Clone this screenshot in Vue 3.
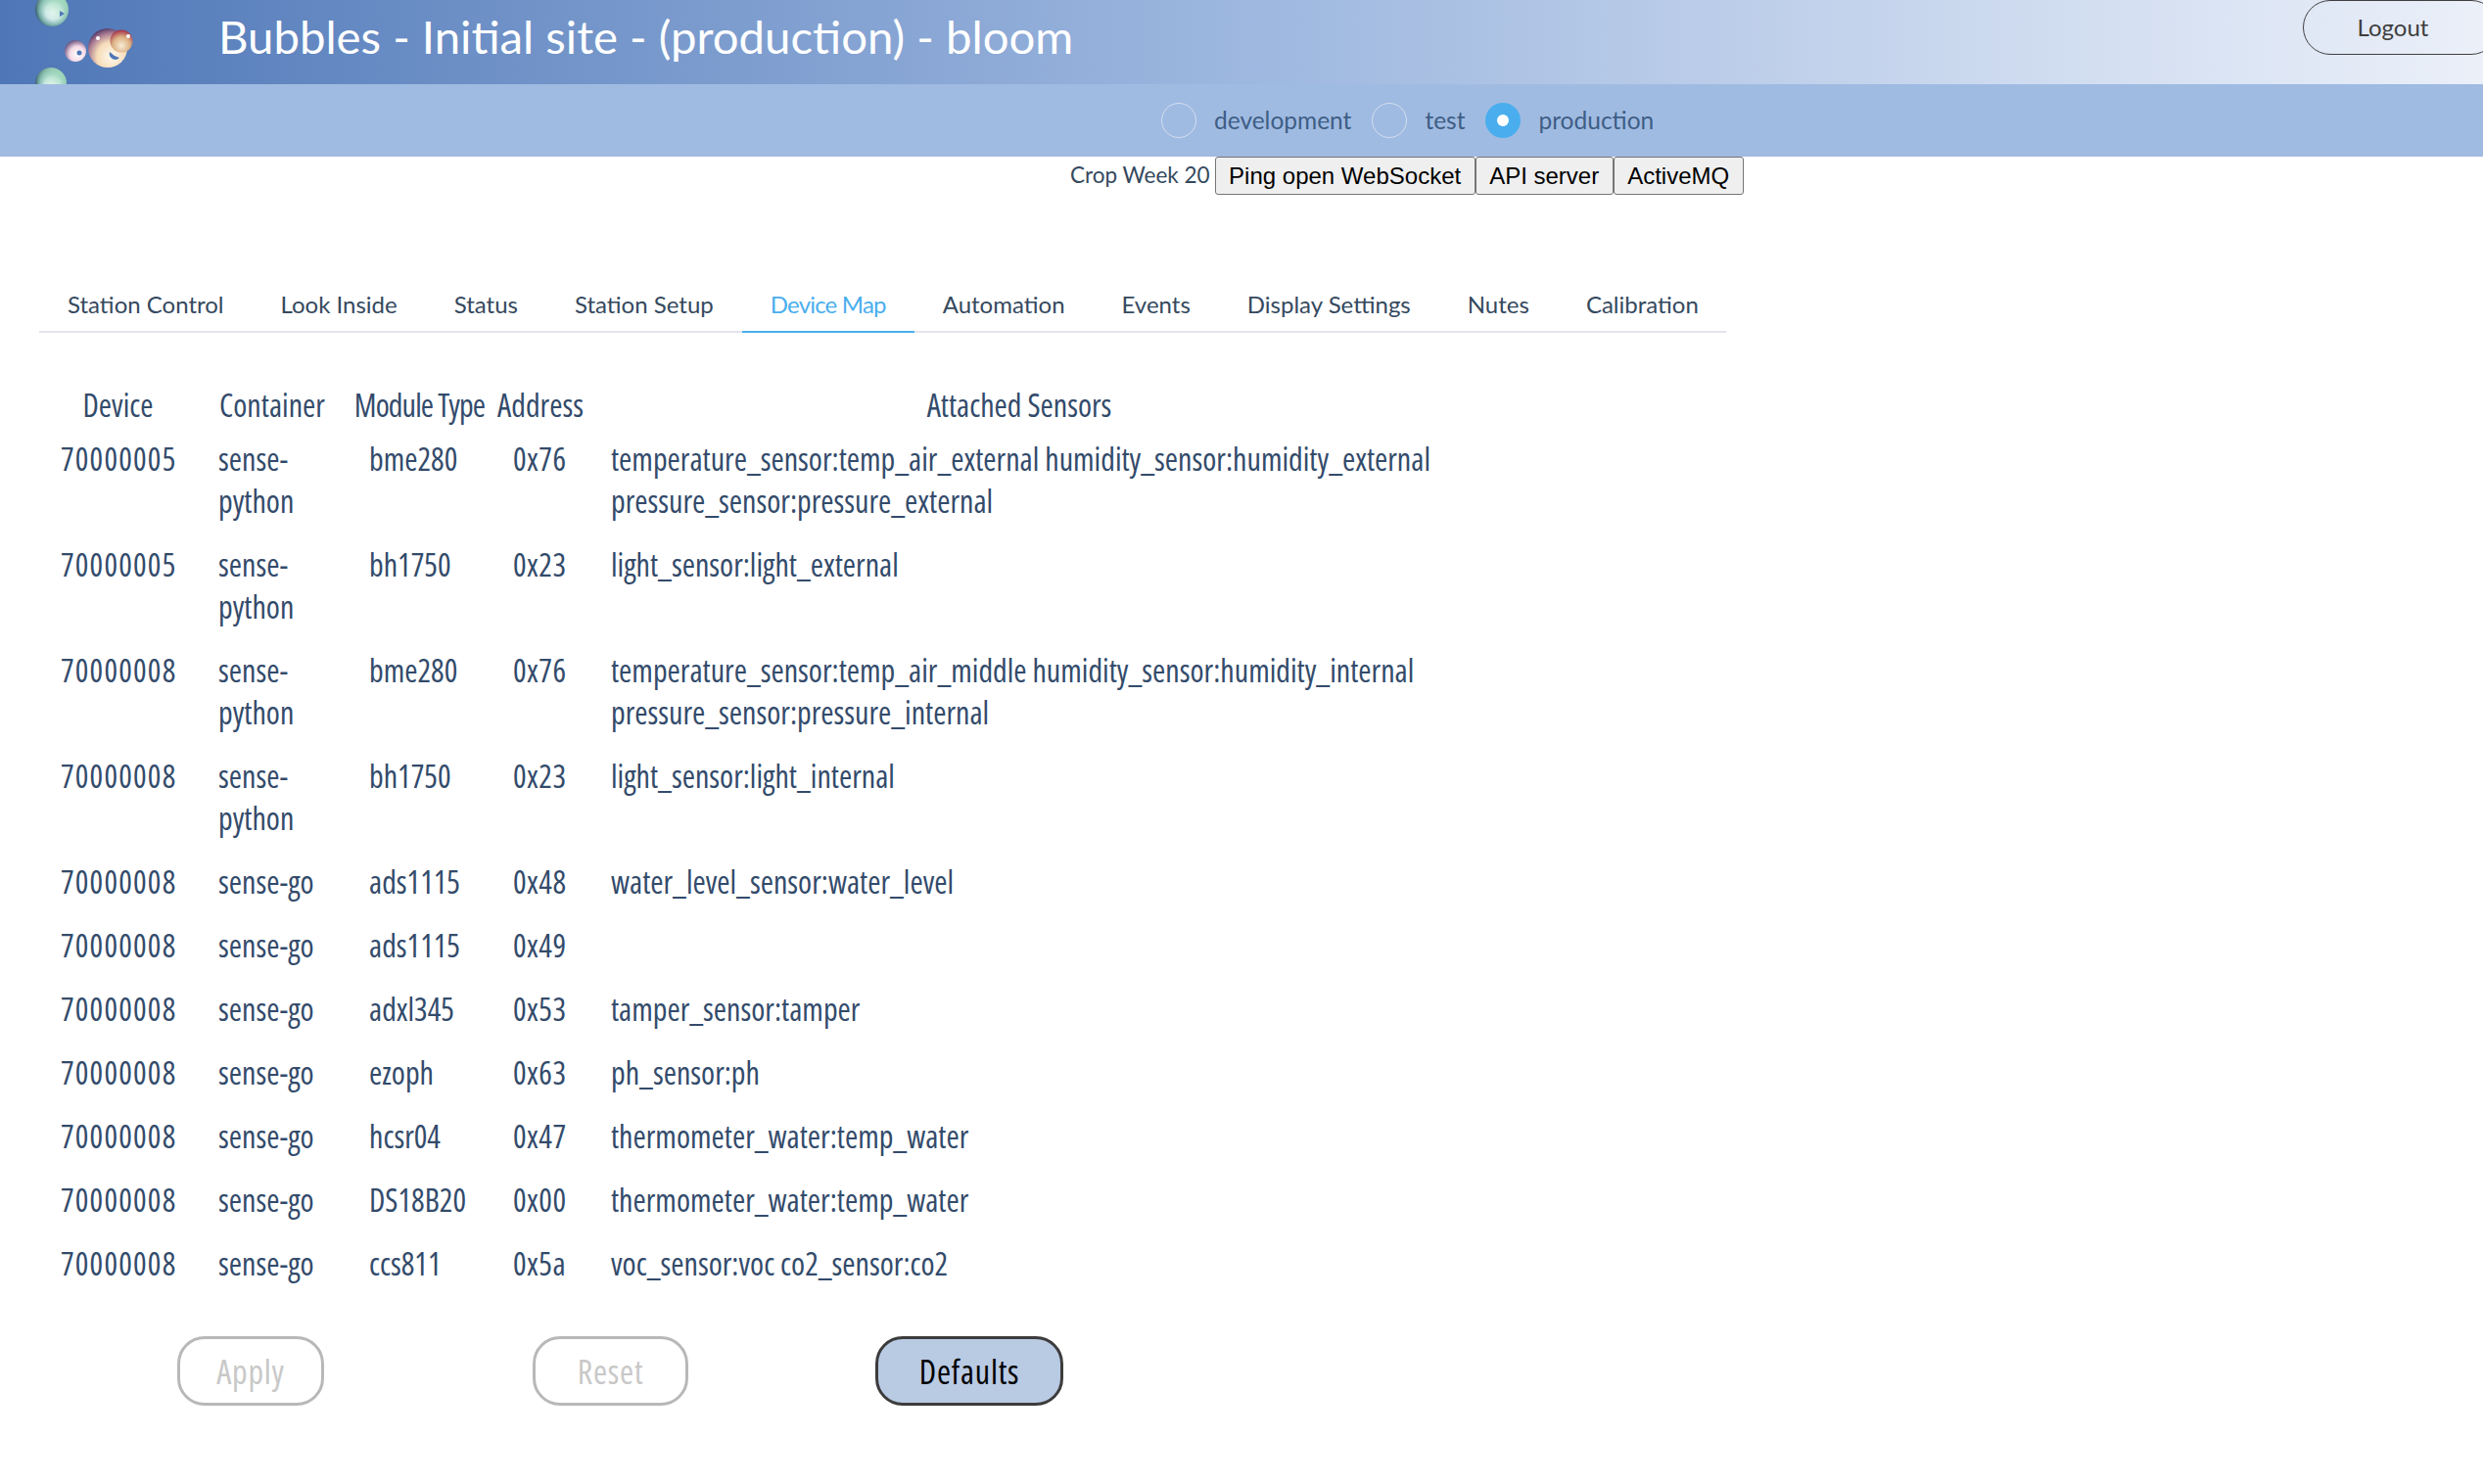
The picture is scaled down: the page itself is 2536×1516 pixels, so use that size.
<template>
  <div class="page">
    <header class="topbar">
      <svg class="logo" width="140" height="86" viewBox="0 0 140 86" aria-hidden="true">
        <defs>
          <radialGradient id="teal" cx="0.55" cy="0.55" r="0.6">
            <stop offset="0" stop-color="#ffffff" />
            <stop offset="0.4" stop-color="#d8ecf0" />
            <stop offset="0.72" stop-color="#6fa8a4" />
            <stop offset="1" stop-color="#13294a" />
          </radialGradient>
          <linearGradient id="tealcap" x1="0.8" y1="0" x2="0.3" y2="0.8">
            <stop offset="0" stop-color="#a8e0c0" />
            <stop offset="1" stop-color="#a8e0c0" stop-opacity="0" />
          </linearGradient>
          <radialGradient id="pink" cx="0.6" cy="0.65" r="0.65">
            <stop offset="0" stop-color="#ffffff" />
            <stop offset="0.55" stop-color="#f6dbe6" />
            <stop offset="1" stop-color="#6f5a86" />
          </radialGradient>
          <radialGradient id="amber" cx="0.6" cy="0.72" r="0.75">
            <stop offset="0" stop-color="#fffaf0" />
            <stop offset="0.5" stop-color="#f6dcb8" />
            <stop offset="0.8" stop-color="#a87a92" />
            <stop offset="1" stop-color="#4c3468" />
          </radialGradient>
          <radialGradient id="red" cx="0.5" cy="0.7" r="0.7">
            <stop offset="0" stop-color="#f8ecd4" />
            <stop offset="0.55" stop-color="#dcb184" />
            <stop offset="1" stop-color="#a02c48" />
          </radialGradient>
        </defs>
        <circle cx="53" cy="10" r="17" fill="url(#teal)" />
        <circle cx="53" cy="10" r="17" fill="url(#tealcap)" />
        <path d="M61 11l5 3-5 3z" fill="#4f77b7" />
        <circle cx="77" cy="52" r="11" fill="url(#pink)" />
        <circle cx="81" cy="54" r="2.5" fill="#4f77b7" />
        <circle cx="110" cy="49" r="20" fill="url(#amber)" />
        <path d="M112 53a6 6 0 0 0 10 6l-5-2z" fill="#4f77b7" />
        <circle cx="100" cy="39" r="2" fill="#fff" />
        <circle cx="124" cy="42" r="11.5" fill="url(#red)" />
        <circle cx="131" cy="37" r="2" fill="#fff" />
        <circle cx="52" cy="85" r="16" fill="url(#teal)" />
        <circle cx="52" cy="85" r="16" fill="url(#tealcap)" />
      </svg>
      <h1 class="title">Bubbles - Initial site - (production) - bloom</h1>
      <button type="button" class="logout">Logout</button>
    </header>

    <div class="envbar">
      <label v-for="e in envs" :key="e" class="env">
        <span class="radio" :class="{ on: e === env }"></span>
        <span>{{ e }}</span>
      </label>
    </div>

    <div class="toolrow">
      <span class="week">Crop Week 20</span>
      <button v-for="b in tools" :key="b" type="button" class="tool">{{ b }}</button>
    </div>

    <nav class="tabs">
      <a v-for="t in tabs" :key="t" class="tab" :class="{ active: t === tab }">{{ t }}</a>
    </nav>

    <table class="map">
      <colgroup>
        <col class="c1" /><col class="c2" /><col class="c3" /><col class="c4" /><col class="c5" />
      </colgroup>
      <thead>
        <tr>
          <th>Device</th>
          <th>Container</th>
          <th>Module Type</th>
          <th>Address</th>
          <th>Attached Sensors</th>
        </tr>
      </thead>
      <tbody>
        <tr v-for="(r, i) in rows" :key="i">
          <td>{{ r[0] }}</td>
          <td>{{ r[1] }}</td>
          <td>{{ r[2] }}</td>
          <td>{{ r[3] }}</td>
          <td>{{ r[4] }}</td>
        </tr>
      </tbody>
    </table>

    <div class="actions">
      <button type="button" class="act apply" disabled>Apply</button>
      <button type="button" class="act reset" disabled>Reset</button>
      <button type="button" class="act defaults">Defaults</button>
    </div>
  </div>
</template>

<script setup>
const envs = ['development', 'test', 'production']
const env = 'production'
const tools = ['Ping open WebSocket', 'API server', 'ActiveMQ']
const tabs = ['Station Control', 'Look Inside', 'Status', 'Station Setup', 'Device Map', 'Automation', 'Events', 'Display Settings', 'Nutes', 'Calibration']
const tab = 'Device Map'

const rows = [
  ['70000005', 'sense-python', 'bme280', '0x76', 'temperature_sensor:temp_air_external humidity_sensor:humidity_external pressure_sensor:pressure_external'],
  ['70000005', 'sense-python', 'bh1750', '0x23', 'light_sensor:light_external'],
  ['70000008', 'sense-python', 'bme280', '0x76', 'temperature_sensor:temp_air_middle humidity_sensor:humidity_internal pressure_sensor:pressure_internal'],
  ['70000008', 'sense-python', 'bh1750', '0x23', 'light_sensor:light_internal'],
  ['70000008', 'sense-go', 'ads1115', '0x48', 'water_level_sensor:water_level'],
  ['70000008', 'sense-go', 'ads1115', '0x49', ''],
  ['70000008', 'sense-go', 'adxl345', '0x53', 'tamper_sensor:tamper'],
  ['70000008', 'sense-go', 'ezoph', '0x63', 'ph_sensor:ph'],
  ['70000008', 'sense-go', 'hcsr04', '0x47', 'thermometer_water:temp_water'],
  ['70000008', 'sense-go', 'DS18B20', '0x00', 'thermometer_water:temp_water'],
  ['70000008', 'sense-go', 'ccs811', '0x5a', 'voc_sensor:voc co2_sensor:co2']
]
</script>

<style>
html, body { background: #fff; overflow: hidden; }
</style>

<style scoped>
.page {
  width: 2536px;
  height: 1516px;
  font-family: "Open Sans", sans-serif;
  color: #35495e;
  overflow: hidden;
}
.topbar {
  position: relative;
  height: 86px;
  padding-left: 223px;
  background: linear-gradient(90deg, #4f77b7 0%, #9db7df 50%, #ebf0f9 100%);
}
.logo { position: absolute; left: 0; top: 0; }
.title {
  margin: 0;
  font-family: Lato, sans-serif;
  font-weight: 400;
  font-size: 47.3px;
  line-height: 74px;
  color: #fff;
}
.logout {
  position: absolute;
  left: 2352px;
  top: 0;
  width: 200px;
  height: 56px;
  border: 1px solid #3f3f3f;
  border-radius: 28px;
  background: transparent;
  font-family: Lato, sans-serif;
  font-size: 24px;
  color: #3f3f3f;
  padding: 0 16px 2px 0;
}
.envbar {
  height: 74px;
  display: flex;
  align-items: center;
  gap: 21px;
  padding-left: 1186px;
  background: #a0bbe2;
  font-family: Lato, sans-serif;
  font-size: 24.5px;
  line-height: 72px;
  color: #3e5e85;
}
.env { display: flex; align-items: center; gap: 18px; }
.radio {
  width: 36px;
  height: 36px;
  border: 1px solid #d5dfef;
  border-radius: 50%;
  box-sizing: border-box;
}
.radio.on {
  border: 12.5px solid #4aaeee;
  background: #fff;
}
.toolrow {
  display: flex;
  align-items: center;
  height: 39px;
  padding-left: 1093px;
  font-family: Lato, sans-serif;
  font-size: 22.5px;
}
.week { margin: 0 5px 2px 0; }
.tool {
  height: 39px;
  padding: 0 13.5px;
  border: 1px solid #767676;
  border-radius: 3px;
  background: #efefef;
  font-family: "Liberation Sans", sans-serif;
  font-size: 24px;
  color: #000;
}
.tabs {
  display: flex;
  width: 1723px;
  margin: 80px 0 0 40px;
  border-bottom: 2px solid #e4e4ef;
  font-family: Lato, sans-serif;
  font-size: 24px;
  white-space: nowrap;
}
.tab {
  padding: 0 29px;
  height: 59px;
  line-height: 64px;
  margin-bottom: -2px;
  border-bottom: 2px solid transparent;
}
.tab.active { color: #4aaeee; border-bottom-color: #4aaeee; letter-spacing: -0.8px; }
.map {
  margin: 41px 0 0 40px;
  border-collapse: collapse;
  table-layout: fixed;
  width: 1470px;
  font-size: 32px;
  font-stretch: 75%;
  line-height: 43px;
  color: #334b6b;
}
.c1 { width: 161px; }
.c2 { width: 154px; }
.c3 { width: 147px; }
.c4 { width: 100px; }
.c5 { width: 908px; }
th {
  font-weight: 400;
  padding: 11px 0 1px;
  text-align: center;
  white-space: nowrap;
}
th:nth-child(3) { letter-spacing: -0.9px; }
th:last-child { padding-right: 30px; }
td {
  padding: 11px 22px;
  vertical-align: top;
  text-align: left;
}
td:first-child { letter-spacing: 1.2px; white-space: nowrap; }
td:nth-child(4) { letter-spacing: 0.5px; }
.actions {
  display: flex;
  align-items: center;
  margin: 42px 0 0 181px;
}
.act {
  height: 71px;
  border-radius: 28px;
  font-family: inherit;
  font-stretch: 75%;
  font-size: 34px;
  padding: 0;
  background: #fff;
  letter-spacing: 0.8px;
}
.apply, .reset { border: 3px solid #b8b8b8; color: #c8c8c8; }
.apply { width: 150px; }
.reset { width: 159px; margin-left: 213px; }
.defaults {
  width: 192px;
  margin-left: 191px;
  border: 3px solid #3c3c3c;
  background: #b9cae3;
  color: #000;
}
</style>
